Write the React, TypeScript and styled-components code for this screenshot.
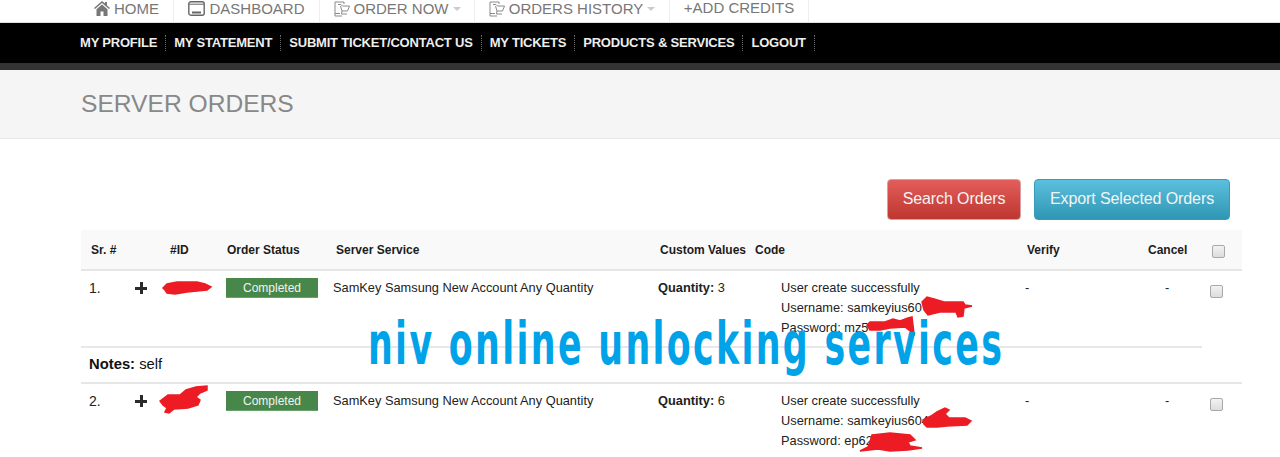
import type { ReactNode } from 'react';
import styled, { createGlobalStyle } from 'styled-components';

const GlobalStyle = createGlobalStyle`
  html, body {
    margin: 0;
    padding: 0;
    background: #fff;
    font-family: "Liberation Sans", Arial, sans-serif;
    overflow: hidden;
  }
`;

const Page = styled.div`
  position: relative;
  width: 1280px;
  height: 457px;
  overflow: hidden;
`;

const TopNav = styled.nav`
  display: flex;
  height: 22px;
  padding-left: 80px;
  border-bottom: 1px solid #e0e0e0;
`;

const TopItem = styled.div<{ $width: number; $raised?: boolean }>`
  display: flex;
  align-items: center;
  justify-content: center;
  gap: 4px;
  box-sizing: border-box;
  width: ${(p) => p.$width}px;
  height: 22px;
  padding-bottom: ${(p) => (p.$raised ? 8 : 5)}px;
  border-right: 1px solid #eeeeee;
  font-size: 15px;
  color: #777;
  white-space: nowrap;
`;

const Caret = styled.span`
  width: 0;
  height: 0;
  border-left: 4px solid transparent;
  border-right: 4px solid transparent;
  border-top: 4px solid #ccc;
`;

const BlackBar = styled.div`
  display: flex;
  align-items: center;
  height: 40px;
  padding-left: 80px;
  background: #000;
  border-bottom: 7px solid #333;
`;

const BarLink = styled.div`
  padding-right: 8px;
  margin-right: 8px;
  border-right: 1px dotted #666;
  font-size: 13px;
  line-height: 16px;
  font-weight: 700;
  letter-spacing: -0.2px;
  color: #eee;
  white-space: nowrap;
`;

const PageHeader = styled.header`
  display: flex;
  align-items: center;
  height: 68px;
  padding-left: 81px;
  background: #f5f5f5;
  border-bottom: 1px solid #e8e8e8;
`;

const Title = styled.h1`
  margin: 0;
  font-size: 24.6px;
  font-weight: 400;
  color: #888;
`;

const Actions = styled.div`
  display: flex;
  justify-content: flex-end;
  gap: 13px;
  padding: 40px 50px 10px 0;
`;

const ActionButton = styled.button<{ $top: string; $bottom: string; $border: string; $width: number }>`
  box-sizing: border-box;
  width: ${(p) => p.$width}px;
  height: 41px;
  padding: 0 0 2px;
  border: 1px solid ${(p) => p.$border};
  border-radius: 4px;
  background: linear-gradient(${(p) => p.$top}, ${(p) => p.$bottom});
  font-family: inherit;
  font-size: 16px;
  color: #f4f4f4;
  letter-spacing: -0.1px;
`;

const Table = styled.section`
  margin: 0 38px 0 81px;
  font-size: 12.8px;
  color: #222;
`;

const HeadRow = styled.div`
  display: grid;
  grid-template-columns: 79px 57px 109px 324px 95px 272px 121px 64px 1fr;
  align-items: center;
  box-sizing: border-box;
  height: 41px;
  padding-left: 10px;
  background: #f9f9f9;
  border-bottom: 2px solid #e6e6e6;
  font-size: 12px;
  font-weight: 700;
  color: #1c1c1c;
`;

const BodyRow = styled.div`
  display: grid;
  grid-template-columns: 46px 28px 63px 107px 325px 123px 244px 140px 45px 1fr;
  align-items: start;
  box-sizing: border-box;
  height: 75px;
  padding: 7px 0 0 8px;
`;

const Cell = styled.div<{ $large?: boolean }>`
  position: relative;
  font-size: ${(p) => (p.$large ? 14 : 12.8)}px;
  line-height: 20px;
  white-space: nowrap;
`;

const Plus = styled.span`
  display: block;
  width: 12px;
  height: 12px;
  margin-top: 4px;
  background:
    linear-gradient(#2a2a2a, #2a2a2a) center / 12px 3px no-repeat,
    linear-gradient(#2a2a2a, #2a2a2a) center / 3px 12px no-repeat;
`;

const StatusBadge = styled.div`
  width: 92px;
  height: 20px;
  background: #47874a;
  border-bottom: 1px solid #6aa06c;
  box-sizing: border-box;
  text-align: center;
  font-size: 12px;
  line-height: 20px;
  color: #f3f3f3;
`;

const CodeLine = styled.div`
  position: relative;
  height: 20px;
  line-height: 20px;
  white-space: nowrap;
`;

const CheckBox = styled.span<{ $offset: number }>`
  display: block;
  box-sizing: border-box;
  width: 13px;
  height: 13px;
  margin-top: ${(p) => p.$offset}px;
  background: linear-gradient(#f2f2f2, #dcdcdc);
  border: 1px solid #a9a9a9;
  border-radius: 2px;
`;

const NotesRow = styled.div`
  box-sizing: border-box;
  height: 38px;
  border-bottom: 2px solid #e6e6e6;
`;

const NotesBody = styled.div`
  box-sizing: border-box;
  width: 1121px;
  height: 36px;
  padding: 6px 0 0 8px;
  border-top: 2px solid #e8e8e8;
  font-size: 14.8px;
  line-height: 20px;
  color: #111;
`;

const Scribble = styled.svg<{ $left: number; $top: number }>`
  position: absolute;
  left: ${(p) => p.$left}px;
  top: ${(p) => p.$top}px;
  overflow: visible;
  fill: #ed1c24;
  stroke: #ed1c24;
  stroke-width: 1.5;
`;

const Watermark = styled.div`
  position: absolute;
  left: 368px;
  top: 310px;
  font-family: "DejaVu Sans", sans-serif;
  font-size: 58px;
  line-height: 68px;
  font-weight: 700;
  letter-spacing: 3.9px;
  color: #00a2e8;
  white-space: nowrap;
  transform: scaleX(0.6);
  transform-origin: left top;
`;

const HomeIcon = () => (
  <svg width="16" height="15" viewBox="0 0 16 15" fill="#777">
    <path d="M8 0 L11 2.6 V1 H13 V4.4 L16 7 L15 8 L8 2 L1 8 L0 7 Z M2.5 8.3 L8 3.6 L13.5 8.3 V15 H9.5 V10.5 H6.5 V15 H2.5 Z" />
  </svg>
);

const DashIcon = () => (
  <svg width="17" height="15" viewBox="0 0 17 15" fill="none" stroke="#666">
    <rect x="0.8" y="0.8" width="15.4" height="13.4" rx="2" strokeWidth="1.4" />
    <path d="M1 3.2 H16" strokeWidth="1" />
    <path d="M4 11.5 H13" strokeWidth="2" />
  </svg>
);

const CartIcon = () => (
  <svg width="16" height="16" viewBox="0 0 16 16" fill="none" stroke="#8a8a8a" strokeWidth="1">
    <path d="M10 3 V1 H1 V15 H8" />
    <path d="M4 3.5 H7 L8.5 5 H15.5 L13.5 10 H8 L6.5 5" />
    <path d="M8 10 L7.5 13 H13" />
    <path d="M1 12.5 H6" />
  </svg>
);

const RedactId1 = () => (
  <Scribble $left={0} $top={4} width="48" height="12" viewBox="0 0 48 12">
    <path d="M0 6 L4 2 L14 0 L34 0 L42 2 L48 5 L44 8 L34 9 L24 10 L12 12 L4 11 L2 8 Z" />
  </Scribble>
);

const RedactId2 = () => (
  <Scribble $left={-3} $top={-5} width="48" height="27" viewBox="0 0 48 27">
    <path d="M0 15 L8 9 L20 9 L26 4 L36 1 L47 0 L47 4 L40 7 L36 11 L40 14 L38 19 L28 22 L14 23 L9 27 L5 26 L7 22 L3 19 Z" />
  </Scribble>
);

const RedactUser1 = () => (
  <Scribble $left={141} $top={-1} width="50" height="20" viewBox="0 0 50 20">
    <path d="M0 5 L5 0 L12 2 L22 5 L41 5 L43 8 L50 9 L42 11 L41 19 L36 20 L34 15 L18 15 L6 18 L2 13 Z" />
  </Scribble>
);

const RedactPass1 = () => (
  <Scribble $left={86} $top={-1} width="47" height="18" viewBox="0 0 47 18">
    <path d="M0 8 L3 5 L18 5 L26 2 L33 4 L41 1 L45 0 L46 8 L47 17 L38 10 L23 11 L13 13 L3 13 Z" />
  </Scribble>
);

const RedactUser2 = () => (
  <Scribble $left={142} $top={-3} width="48" height="20" viewBox="0 0 48 20">
    <path d="M0 12 L8 8 L14 4 L22 0 L26 2 L22 6 L26 10 L42 10 L48 13 L44 17 L24 18 L14 19 L4 19 L1 16 Z" />
  </Scribble>
);

const RedactPass2 = () => (
  <Scribble $left={79} $top={1} width="62" height="20" viewBox="0 0 62 20">
    <path d="M12 3 L30 1 L50 3 L55 8 L48 10 L50 14 L62 16 L48 18 L30 19 L18 17 L0 19 L8 15 L10 10 Z" />
  </Scribble>
);

type OrderProps = {
  sr: string;
  qty: string;
  user: string;
  pass: string;
  idMark: ReactNode;
  userMark: ReactNode;
  passMark: ReactNode;
};

const OrderRow = ({ sr, qty, user, pass, idMark, userMark, passMark }: OrderProps) => (
  <BodyRow>
    <Cell $large>{sr}</Cell>
    <Cell>
      <Plus />
    </Cell>
    <Cell>{idMark}</Cell>
    <Cell>
      <StatusBadge>Completed</StatusBadge>
    </Cell>
    <Cell>SamKey Samsung New Account Any Quantity</Cell>
    <Cell>
      <b>Quantity:</b> {qty}
    </Cell>
    <Cell>
      <CodeLine>User create successfully</CodeLine>
      <CodeLine>
        Username: {user}
        {userMark}
      </CodeLine>
      <CodeLine>
        Password: {pass}
        {passMark}
      </CodeLine>
    </Cell>
    <Cell>-</Cell>
    <Cell>-</Cell>
    <Cell>
      <CheckBox $offset={7} />
    </Cell>
  </BodyRow>
);

export default function App() {
  return (
    <Page>
      <GlobalStyle />
      <TopNav>
        <TopItem $width={94}>
          <HomeIcon /> HOME
        </TopItem>
        <TopItem $width={146}>
          <DashIcon /> DASHBOARD
        </TopItem>
        <TopItem $width={155}>
          <CartIcon /> ORDER NOW
          <Caret />
        </TopItem>
        <TopItem $width={195}>
          <CartIcon /> ORDERS HISTORY
          <Caret />
        </TopItem>
        <TopItem $width={139} $raised>
          +ADD CREDITS
        </TopItem>
      </TopNav>
      <BlackBar>
        <BarLink>MY PROFILE</BarLink>
        <BarLink>MY STATEMENT</BarLink>
        <BarLink>SUBMIT TICKET/CONTACT US</BarLink>
        <BarLink>MY TICKETS</BarLink>
        <BarLink>PRODUCTS &amp; SERVICES</BarLink>
        <BarLink>LOGOUT</BarLink>
      </BlackBar>
      <PageHeader>
        <Title>SERVER ORDERS</Title>
      </PageHeader>
      <Actions>
        <ActionButton $width={134} $top="#e35d5b" $bottom="#bd362f" $border="#d8a0a0">
          Search Orders
        </ActionButton>
        <ActionButton $width={196} $top="#5bc0de" $bottom="#2f96b4" $border="#3a9cbc">
          Export Selected Orders
        </ActionButton>
      </Actions>
      <Table>
        <HeadRow>
          <div>Sr. #</div>
          <div>#ID</div>
          <div>Order Status</div>
          <div>Server Service</div>
          <div>Custom Values</div>
          <div>Code</div>
          <div>Verify</div>
          <div>Cancel</div>
          <div>
            <CheckBox $offset={3} />
          </div>
        </HeadRow>
        <OrderRow
          sr="1."
          qty="3"
          user="samkeyius60"
          pass="mz5"
          idMark={<RedactId1 />}
          userMark={<RedactUser1 />}
          passMark={<RedactPass1 />}
        />
        <NotesRow>
          <NotesBody>
            <b>Notes:</b> self
          </NotesBody>
        </NotesRow>
        <OrderRow
          sr="2."
          qty="6"
          user="samkeyius604"
          pass="ep62"
          idMark={<RedactId2 />}
          userMark={<RedactUser2 />}
          passMark={<RedactPass2 />}
        />
      </Table>
      <Watermark>niv online unlocking services</Watermark>
    </Page>
  );
}
